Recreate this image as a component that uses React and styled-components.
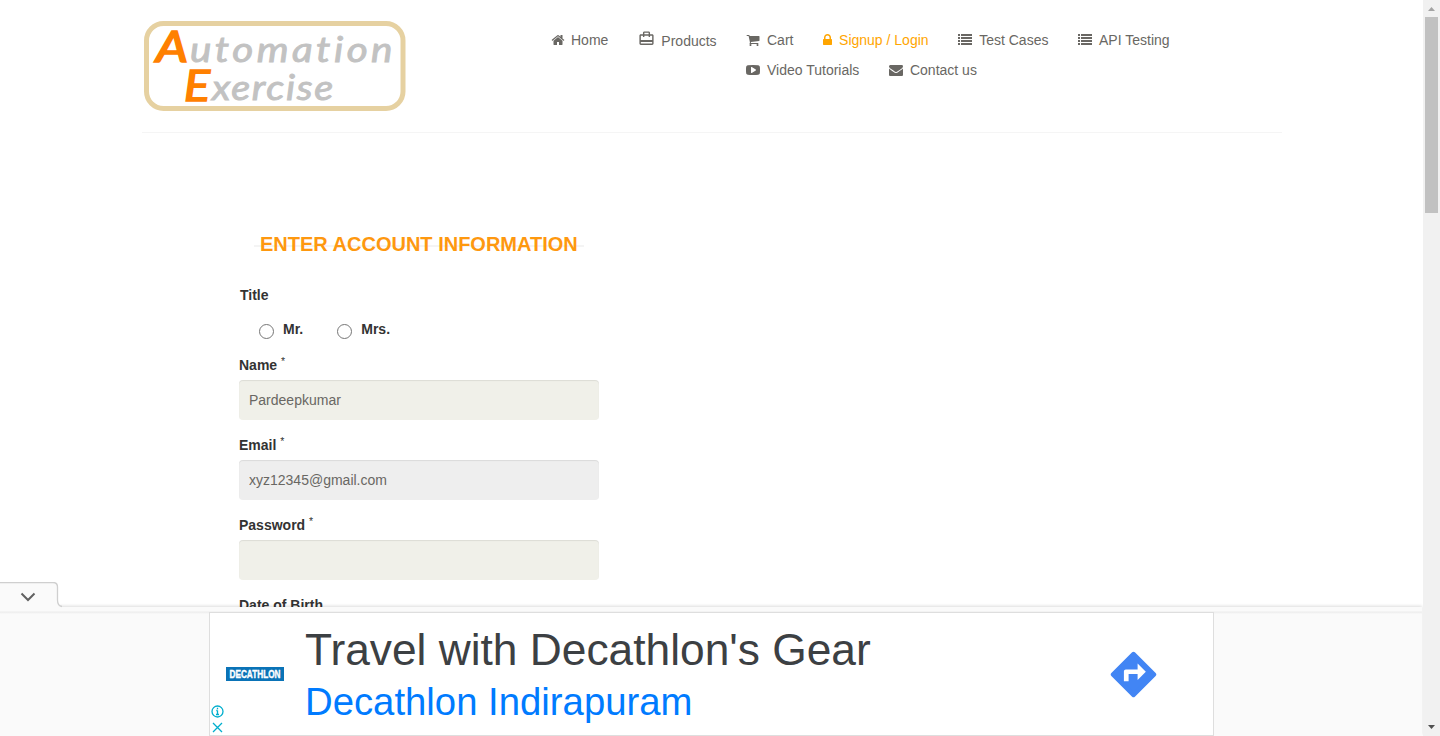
import React from "react";
import styled, { createGlobalStyle } from "styled-components";

const GlobalStyle = createGlobalStyle`
  * { box-sizing: border-box; }
  body { margin: 0; background: #fff; font-family: "Liberation Sans", Arial, sans-serif; font-size: 14px; color: #333; overflow: hidden; }
`;

const Window = styled.div`
  display: flex;
  width: 1440px;
  height: 736px;
  overflow: hidden;
`;
const Viewport = styled.div`
  display: flex;
  flex-direction: column;
  width: 1423px;
  height: 736px;
  overflow: hidden;
`;
const Page = styled.main`
  height: 607px;
  overflow: hidden;
`;
const Header = styled.header`
  display: flex;
  align-items: flex-start;
  width: 1140px;
  height: 133px;
  margin-left: 142px;
  padding: 21px 0 0 2px;
  border-bottom: 1px solid #f5f5f5;
`;
const LogoArt = styled.svg`
  display: block;
  width: 262px;
  height: 90px;
  flex: none;
  font-family: Lato, sans-serif;
  font-style: italic;
  font-variant-ligatures: none;
`;
const Nav = styled.nav`
  display: flex;
  margin-left: 145px;
  padding-top: 9px;
`;
const NavWrap = styled.div`
  display: flex;
  flex-wrap: wrap;
  width: 480px;
  column-gap: 29.6px;
  row-gap: 10px;
`;
const NavLink = styled.a`
  display: flex;
  align-items: center;
  gap: ${(p) => p.$gap || 7}px;
  height: 20px;
  line-height: 20px;
  white-space: nowrap;
  color: ${(p) => (p.$active ? "orange" : "#696763")};
  margin-right: ${(p) => p.$after || 0}px;
  padding-top: ${(p) => p.$drop || 0}px;
`;
const Icon = styled.svg`
  display: block;
  flex: none;
  width: ${(p) => p.$w || 14}px;
  height: ${(p) => p.$h || 14}px;
  margin-top: ${(p) => p.$top || 0}px;
  fill: currentColor;
`;

const Form = styled.form`
  width: 360px;
  margin: 98px 0 0 239px;
`;
const Title = styled.h2`
  width: 330px;
  height: 26px;
  margin: 0 0 28px 15px;
  padding-left: 6px;
  line-height: 26px;
  font-size: 20px;
  font-weight: 700;
  white-space: nowrap;
  color: #fe980f;
  background: linear-gradient(#f4f4f4, #f4f4f4) 0 14px / 100% 2px no-repeat;
`;
const Label = styled.label`
  display: block;
  height: 20px;
  line-height: 20px;
  font-weight: 700;
  margin-left: ${(p) => p.$indent || 0}px;
`;
const Star = styled.sup`
  position: relative;
  top: -5px;
  vertical-align: baseline;
  line-height: 0;
  font-size: 10.5px;
  font-weight: 400;
`;
const Radios = styled.div`
  display: flex;
  gap: 34px;
  height: 20px;
  margin: 14px 0 16px 20px;
`;
const RadioLabel = styled.label`
  display: flex;
  gap: 9px;
  line-height: 20px;
  font-weight: 700;
`;
const Radio = styled.input`
  appearance: none;
  width: 15px;
  height: 15px;
  margin: 5px 0 0;
  border: 1px solid #767676;
  border-radius: 50%;
  background: #fff;
`;
const Input = styled.input`
  display: block;
  width: 360px;
  height: 40px;
  margin: 5px 0 15px;
  padding: 0 10px;
  border: 0;
  border-radius: 4px;
  background: ${(p) => (p.disabled ? "#eee" : "#f0f0e9")};
  box-shadow: inset 0 1px 1px rgba(0, 0, 0, 0.085);
  color: #696763;
  font: 14px "Liberation Sans", Arial, sans-serif;
`;

const AdBar = styled.aside`
  position: relative;
  width: 1422px;
  height: 129px;
  padding-top: 5px;
  background: linear-gradient(#fafafa 4px, #ececec 5px, #fafafa 7px);
  box-shadow: 0 -1px 3px rgba(0, 0, 0, 0.14);
`;
const AdTab = styled.button`
  position: absolute;
  left: -1px;
  top: -25px;
  width: 64px;
  height: 26px;
  padding: 0;
  border: 0;
  background: none;
`;
const AdCard = styled.section`
  display: flex;
  width: 1005px;
  height: 124px;
  margin-left: 209px;
  border: 1px solid #dedede;
  background: #fff;
`;
const AdSide = styled.div`
  display: flex;
  flex-direction: column;
  width: 95px;
`;
const BrandArt = styled.svg`
  display: block;
  flex: none;
  width: 58px;
  height: 14px;
  margin: 54px 0 24px 16px;
  background: #0a73b7;
  font: 700 10.5px "Liberation Sans", sans-serif;
`;
const Choice = styled.svg`
  display: block;
  flex: none;
  width: 13px;
  height: 13px;
  margin: 0 0 3px 1px;
  fill: none;
  stroke: #00aecd;
  stroke-width: 1.3;
`;
const AdCopy = styled.div`
  width: 805px;
  white-space: nowrap;
`;
const AdTitle = styled.div`
  height: 52px;
  margin-top: 11px;
  line-height: 52px;
  font-size: 44.3px;
  color: #3c4043;
`;
const AdPlace = styled.div`
  height: 46px;
  margin-top: 3px;
  line-height: 46px;
  font-size: 38.3px;
  color: #007bff;
`;
const Directions = styled.svg`
  display: block;
  width: 47px;
  height: 47px;
  margin-top: 38px;
`;

const Scrollbar = styled.div`
  display: flex;
  flex-direction: column;
  align-items: center;
  width: 17px;
  height: 736px;
  background: #f1f1f1;
`;
const Thumb = styled.div`
  width: 13px;
  height: 196px;
  margin-bottom: auto;
  background: #c1c1c1;
`;
const ArrowBox = styled.svg`
  display: block;
  width: 17px;
  height: 17px;
  fill: ${(p) => p.$tone};
`;

const paths = {
  home: "M1472 992v480q0 26-19 45t-45 19h-384v-384h-256v384h-384q-26 0-45-19t-19-45v-480q0-1 .5-3t.5-3l575-474 575 474q1 2 1 6zm223-69l-62 74q-8 9-21 11h-3q-13 0-21-7l-692-577-692 577q-12 8-24 7-13-2-21-11l-62-74q-8-10-7-23.5t11-21.5l719-599q32-26 76-26t76 26l244 204v-195q0-14 9-23t23-9h192q14 0 23 9t9 23v408l219 182q10 8 11 21.5t-7 23.5z",
  cart: "M704 1536q0 52-38 90t-90 38-90-38-38-90 38-90 90-38 90 38 38 90zm896 0q0 52-38 90t-90 38-90-38-38-90 38-90 90-38 90 38 38 90zm128-1088v512q0 24-16.5 42.5t-40.5 21.5l-1044 122q13 60 13 70 0 16-24 64h920q26 0 45 19t19 45-19 45-45 19h-1024q-26 0-45-19t-19-45q0-11 8-31.5t16-36 21.5-40 15.5-29.5l-177-823h-204q-26 0-45-19t-19-45 19-45 45-19h256q16 0 28.5 6.5t19.5 15.5 13 24.5 8 26 5.5 29.5 4.5 26h1201q26 0 45 19t19 45z",
  lock: "M640 768h512v-192q0-106-75-181t-181-75-181 75-75 181v192zm832 96v576q0 40-28 68t-68 28h-960q-40 0-68-28t-28-68v-576q0-40 28-68t68-28h32v-192q0-184 132-316t316-132 316 132 132 316v192h32q40 0 68 28t28 68z",
  list: "M0 128h256v256H0zM384 128h1408v256H384zM0 512h256v256H0zM384 512h1408v256H384zM0 896h256v256H0zM384 896h1408v256H384zM0 1280h256v256H0zM384 1280h1408v256H384z",
  video: "M1280 896q0-37-30-54l-512-320q-31-20-65-2-33 18-33 56v640q0 38 33 56 16 8 31 8 20 0 34-10l512-320q30-17 30-54zm512 0q0 96-1 150t-8.5 136.5-22.5 147.5q-16 73-69 123t-124 58q-222 25-671 25t-671-25q-71-8-124.5-58t-69.5-123q-14-65-21.5-147.5t-8.5-136.5-1-150 1-150 8.5-136.5 22.5-147.5q16-73 69-123t124-58q222-25 671-25t671 25q71 8 124.5 58t69.5 123q14 65 21.5 147.5t8.5 136.5 1 150z",
  mail: "M1792 710v794q0 66-47 113t-113 47h-1472q-66 0-113-47t-47-113v-794q44 49 101 87 362 246 497 345 57 42 92.5 65.5t94.5 48 110 24.5h2q51 0 110-24.5t94.5-48 92.5-65.5q170-123 498-345 57-39 100-87zm0-294q0 79-49 151t-122 123q-376 261-468 325-10 7-42.5 31t-54 38.5-52 32.5-57.5 27-50 9h-2q-23 0-50-9t-57.5-27-52-32.5-54-38.5-42.5-31q-91-64-262-182.5t-205-142.5q-62-42-117-115.5t-55-136.5q0-78 41.5-130t118.5-52h1472q65 0 112.5 47t47.5 113z",
};

const Fa = ({ name, ...rest }) => (
  <Icon viewBox="0 0 1792 1792" {...rest}>
    <path d={paths[name]} fillRule="evenodd" />
  </Icon>
);

function Logo() {
  return (
    <LogoArt viewBox="0 0 262 90">
      <rect x="2.5" y="2.5" width="256.500" height="85" rx="17" fill="#fff" stroke="#e6d1a1" strokeWidth="5" />
      <text x="12" y="41" fontSize="42" fontWeight="400" fill="#ff8000" stroke="#ff8000" strokeWidth="1.600" textLength="32" lengthAdjust="spacingAndGlyphs">A</text>
      <text x="46" y="41" fontSize="35" letterSpacing="3" fill="#c2c2c2" stroke="#c2c2c2" strokeWidth=".9" textLength="206" lengthAdjust="spacingAndGlyphs">utomation</text>
      <text x="40" y="80" fontSize="42" fontWeight="400" fill="#ff8000" stroke="#ff8000" strokeWidth="1.600" textLength="26" lengthAdjust="spacingAndGlyphs">E</text>
      <text x="68" y="78.5" fontSize="35" letterSpacing="1.500" fill="#c2c2c2" stroke="#c2c2c2" strokeWidth=".9" textLength="123" lengthAdjust="spacingAndGlyphs">xercise</text>
    </LogoArt>
  );
}

export default function App() {
  return (
    <Window>
      <GlobalStyle />
      <Viewport>
        <Page>
          <Header>
            <Logo />
            <Nav>
              <NavLink $after={30} $gap={6}><Fa name="home" />Home</NavLink>
              <NavLink $after={29.4} $gap={6} $drop={2}>
                <Icon viewBox="0 0 24 24" $w={17} $h={17} $top={-6}>
                  <path d="M20 6h-3V4c0-1.11-.89-2-2-2H9c-1.11 0-2 .89-2 2v2H4c-1.11 0-2 .89-2 2v11c0 1.11.89 2 2 2h16c1.11 0 2-.89 2-2V8c0-1.11-.89-2-2-2zM9 4h6v2H9V4zm11 15H4v-2h16v2zm0-5H4V8h3v2h2V8h6v2h2V8h3v6z" />
                </Icon>
                Products
              </NavLink>
              <NavWrap>
                <NavLink><Fa name="cart" />Cart</NavLink>
                <NavLink $active>
                  <Icon viewBox="320 0 1152 1792" $w={9}><path d={paths.lock} fillRule="evenodd" /></Icon>
                  Signup / Login
                </NavLink>
                <NavLink><Fa name="list" />Test Cases</NavLink>
                <NavLink><Fa name="list" />API Testing</NavLink>
                <NavLink><Fa name="video" />Video Tutorials</NavLink>
                <NavLink><Fa name="mail" />Contact us</NavLink>
              </NavWrap>
            </Nav>
          </Header>
          <Form>
            <Title>ENTER ACCOUNT INFORMATION</Title>
            <Label as="div" $indent={1}>Title</Label>
            <Radios>
              <RadioLabel><Radio type="radio" name="title" />Mr.</RadioLabel>
              <RadioLabel><Radio type="radio" name="title" />Mrs.</RadioLabel>
            </Radios>
            <Label>Name <Star>*</Star></Label>
            <Input defaultValue="Pardeepkumar" />
            <Label>Email <Star>*</Star></Label>
            <Input defaultValue="xyz12345@gmail.com" disabled />
            <Label>Password <Star>*</Star></Label>
            <Input type="password" />
            <Label>Date of Birth</Label>
          </Form>
        </Page>
        <AdBar>
          <AdTab aria-label="Collapse">
            <svg width="64" height="26" viewBox="0 0 64 26">
              <path d="M0 .5H54Q58.5 .5 58.5 5V18Q58.5 24 63 24.5V26H0Z" fill="#fafafa" />
              <path d="M0 .5H54Q58.5 .5 58.5 5V18Q58.5 24 63 24.5" fill="none" stroke="#cfcfcf" strokeWidth="1.3" />
              <path d="M22.5 11.5l6.5 6.5 6.5-6.5" fill="none" stroke="#616161" strokeWidth="2" />
            </svg>
          </AdTab>
          <AdCard>
            <AdSide>
              <BrandArt viewBox="0 0 58 14">
                <text x="3.5" y="10.8" fill="#fff" stroke="#fff" strokeWidth=".4" textLength="51" lengthAdjust="spacingAndGlyphs">DECATHLON</text>
              </BrandArt>
              <Choice viewBox="0 0 13 13"><circle cx="6.5" cy="6.5" r="5.5" /><path d="M6.5 5.5v4M5.3 5.5h1.2M5 9.500h3M6.5 2.8v1.5" /></Choice>
              <Choice viewBox="0 0 13 13"><path d="M2 2l9 9M11 2l-9 9" /></Choice>
            </AdSide>
            <AdCopy>
              <AdTitle>Travel with Decathlon's Gear</AdTitle>
              <AdPlace>Decathlon Indirapuram</AdPlace>
            </AdCopy>
            <Directions viewBox="0 0 24 24">
              <path fill="#4285f4" stroke="#4285f4" strokeWidth="2" strokeLinejoin="round" d="M12 1.4L22.6 12L12 22.6L1.4 12z" />
              <path fill="#fff" d="M7.1 15.5V10.4q0-1 1-1h6V6.4l4.2 4.2-4.2 4.2v-3H9.5v3.7z" />
            </Directions>
          </AdCard>
        </AdBar>
      </Viewport>
      <Scrollbar>
        <ArrowBox viewBox="0 0 17 17" $tone="#a3a3a3"><path d="M5 11h7L8.5 7z" /></ArrowBox>
        <Thumb />
        <ArrowBox viewBox="0 0 17 17" $tone="#505050"><path d="M5 6h7L8.5 10z" /></ArrowBox>
      </Scrollbar>
    </Window>
  );
}
